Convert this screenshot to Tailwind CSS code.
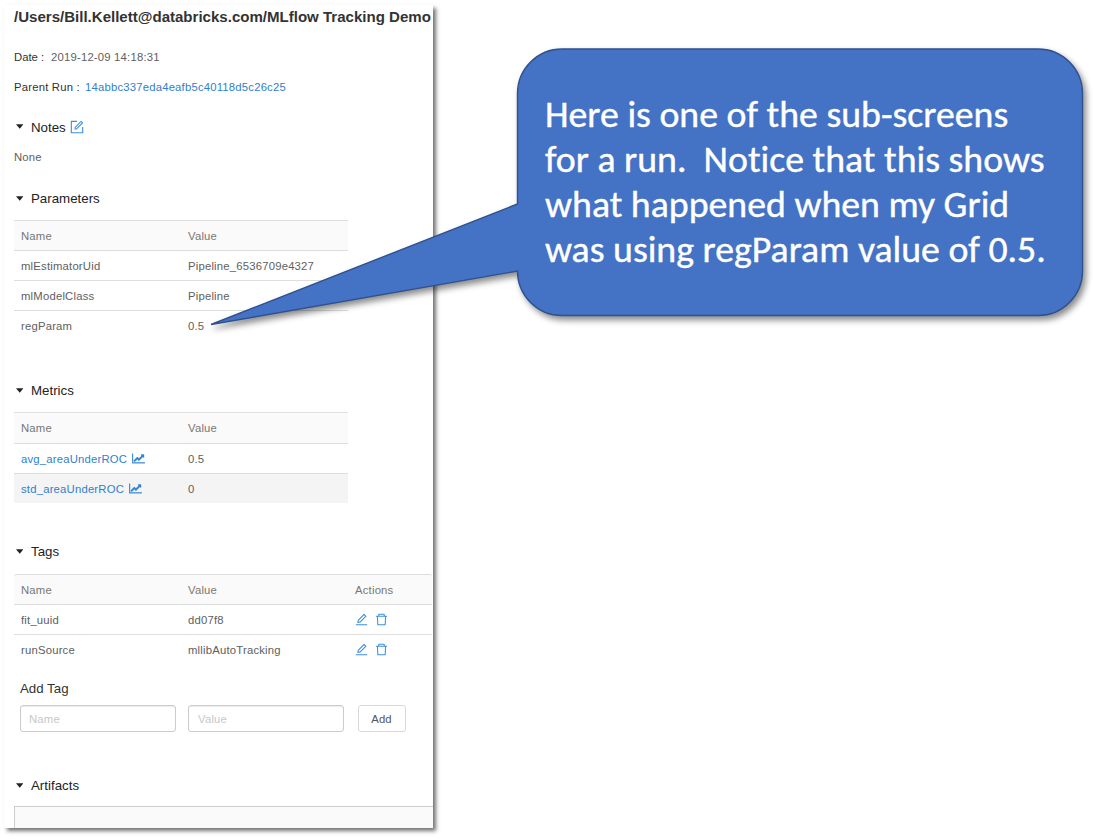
<!DOCTYPE html>
<html lang="en">
<head>
<meta charset="utf-8">
<title>MLflow Tracking Demo</title>
<script src="https://cdn.jsdelivr.net/npm/@tailwindcss/browser@4"></script>
</head>
<body class="bg-white">
<svg class="hidden">
  <symbol id="edit" viewBox="64 64 896 896"><path d="M257.7 752c2 0 4-.2 6-.5L431.9 722c2-.4 3.9-1.3 5.3-2.8l423.9-423.9a9.96 9.96 0 0 0 0-14.1L694.9 114.9c-1.9-1.9-4.4-2.9-7.1-2.9s-5.2 1-7.1 2.9L256.8 538.8c-1.5 1.5-2.4 3.3-2.8 5.3l-29.5 168.2a33.5 33.5 0 0 0 9.4 29.8c6.6 6.4 14.9 9.9 23.8 9.9zm67.4-174.4L687.8 215l73.3 73.3-362.7 362.6-88.9 15.7 15.6-89zM880 836H144c-17.7 0-32 14.3-32 32v36c0 4.4 3.6 8 8 8h784c4.4 0 8-3.6 8-8v-36c0-17.7-14.3-32-32-32z"/></symbol>
  <symbol id="trash" viewBox="64 64 896 896"><path d="M360 184h-8c4.4 0 8-3.6 8-8v8h304v-8c0 4.4 3.6 8 8 8h-8v72h72v-80c0-35.3-28.7-64-64-64H352c-35.3 0-64 28.7-64 64v80h72v-72zm504 72H160c-17.7 0-32 14.3-32 32v32c0 4.4 3.6 8 8 8h60.4l24.7 523c1.6 34.1 29.8 61 63.9 61h454c34.2 0 62.3-26.8 63.9-61l24.7-523H888c4.4 0 8-3.6 8-8v-32c0-17.7-14.3-32-32-32zM731.3 840H292.7l-24.2-512h487l-24.2 512z"/></symbol>
  <symbol id="form" viewBox="64 64 896 896"><path d="M904 512h-56c-4.4 0-8 3.6-8 8v320H184V184h320c4.4 0 8-3.6 8-8v-56c0-4.4-3.6-8-8-8H144c-17.7 0-32 14.3-32 32v736c0 17.7 14.3 32 32 32h736c17.7 0 32-14.3 32-32V520c0-4.4-3.6-8-8-8z"/><path d="M355.9 534.9L354 653.8c-.1 8.9 7.1 16.2 16 16.2h.4l118-2.9c2-.1 4-.9 5.4-2.3l415.9-415c3.1-3.1 3.1-8.2 0-11.3L785.4 114.3c-1.6-1.6-3.6-2.3-5.7-2.3s-4.1.8-5.7 2.3l-415.8 415a8.3 8.3 0 0 0-2.3 5.6zm63.5 23.6L779.7 199l45.2 45.1-360.5 359.7-45.7 1.1.7-46.4z"/></symbol>
  <symbol id="chart" viewBox="0 0 2048 1792"><path d="M2048 1536v128H0V128h128v1408h1920zM1920 288v435q0 21-19.5 29.5T1865 745l-121-121-633 633q-10 10-23 10t-23-10L832 1024l-416 416-192-192 585-585q10-10 23-10t23 10l233 233 464-464-121-121q-16-16-7.5-35.5T1453 256h435q14 0 23 9t9 23z"/></symbol>
  <symbol id="caret" viewBox="0 0 8 5"><path d="M0 0h8L4 5z"/></symbol>
</svg>

<main class="relative h-[839px] w-[1093px] overflow-hidden pl-1 pt-[5px] font-['Liberation_Sans',sans-serif]">
  <section class="h-[823px] w-[429px] overflow-hidden bg-white pl-[10px] text-[11.3px] tracking-[0.2px] text-[#606060] shadow-[3px_3px_4px_rgba(0,0,0,0.55)]">
    <h1 class="flex h-6 items-center whitespace-nowrap pt-px text-[15.05px] font-bold tracking-normal text-[#333]">/Users/Bill.Kellett@databricks.com/MLflow Tracking Demo</h1>
    <p class="mt-[13px] flex h-[30px] items-center whitespace-pre"><span class="w-[37px] tracking-normal text-[#333]">Date :</span><span>2019-12-09 14:18:31</span></p>
    <p class="flex h-[30px] items-center whitespace-pre"><span class="w-[71px] text-[#333]">Parent Run :</span><a class="text-[#2f80d0]">14abbc337eda4eafb5c40118d5c26c25</a></p>
    <h2 class="mt-[11px] flex h-[29px] items-center text-[13.3px] tracking-normal text-[#222]"><svg class="mb-[2px] ml-[1.5px] mr-2 h-[5px] w-[7.5px] fill-[#222]"><use href="#caret"/></svg><span>Notes</span><svg class="mb-px ml-1 h-[14px] w-[14px] fill-[#3d8edb]"><use href="#form"/></svg></h2>
    <p class="flex h-[30px] items-center">None</p>

    <h2 class="mt-[12px] flex h-[30px] items-center text-[13.3px] tracking-normal text-[#222]"><svg class="mb-[2px] ml-[1.5px] mr-2 h-[5px] w-[7.5px] fill-[#222]"><use href="#caret"/></svg><span>Parameters</span></h2>
    <div class="mt-[6px] w-[334px]">
      <div class="flex h-[30px] items-center border-t border-[#ddd] bg-[#fafafa] pl-[7px] pt-px text-[#777]"><span class="w-[167px]">Name</span><span>Value</span></div>
      <div class="flex h-[30px] items-center border-t border-[#ddd] pl-[7px] pt-px"><span class="w-[167px]">mlEstimatorUid</span><span>Pipeline_6536709e4327</span></div>
      <div class="flex h-[30px] items-center border-t border-[#ddd] pl-[7px] pt-px"><span class="w-[167px]">mlModelClass</span><span>Pipeline</span></div>
      <div class="flex h-[31px] items-center border-t border-[#ddd] pl-[7px]"><span class="w-[167px]">regParam</span><span>0.5</span></div>
    </div>

    <h2 class="mt-[35px] flex h-[30px] items-center text-[13.3px] tracking-normal text-[#222]"><svg class="mb-[2px] ml-[1.5px] mr-2 h-[5px] w-[7.5px] fill-[#222]"><use href="#caret"/></svg><span>Metrics</span></h2>
    <div class="mt-[6px] w-[334px]">
      <div class="flex h-[31px] items-center border-t border-[#e0e0e0] bg-[#fafafa] pl-[7px] text-[#777]"><span class="w-[167px]">Name</span><span>Value</span></div>
      <div class="flex h-[30px] items-center border-t border-[#ddd] pl-[7px] pt-px"><a class="flex w-[167px] items-center text-[#2f80d0]"><span>avg_areaUnderROC</span><svg class="mb-px ml-[5px] h-[11px] w-[13px] fill-current stroke-current stroke-[60]"><use href="#chart"/></svg></a><span>0.5</span></div>
      <div class="flex h-[30px] items-center border-t border-[#ddd] bg-[#f4f4f4] pl-[7px] pt-px"><a class="flex w-[167px] items-center text-[#2f80d0]"><span>std_areaUnderROC</span><svg class="mb-px ml-[5px] h-[11px] w-[13px] fill-current stroke-current stroke-[60]"><use href="#chart"/></svg></a><span>0</span></div>
    </div>

    <h2 class="mt-[34px] flex h-[30px] items-center text-[13.3px] tracking-normal text-[#222]"><svg class="mb-[2px] ml-[1.5px] mr-2 h-[5px] w-[7.5px] fill-[#222]"><use href="#caret"/></svg><span>Tags</span></h2>
    <div class="mt-[7px] w-[418px]">
      <div class="flex h-[30px] items-center rounded-t-[3px] border-t border-[#ddd] bg-[#fafafa] pl-[7px] pt-px text-[#777]"><span class="w-[167px]">Name</span><span class="w-[167px]">Value</span><span>Actions</span></div>
      <div class="flex h-[30px] items-center border-t border-[#ddd] pl-[7px] pt-px"><span class="w-[167px]">fit_uuid</span><span class="w-[167px]">dd07f8</span><svg class="mb-px h-[13px] w-[13px] fill-[#3d8edb]"><use href="#edit"/></svg><svg class="mb-px ml-[7px] h-[13px] w-[13px] fill-[#3d8edb]"><use href="#trash"/></svg></div>
      <div class="flex h-[31px] items-center border-t border-[#ddd] pl-[7px]"><span class="w-[167px]">runSource</span><span class="w-[167px]">mllibAutoTracking</span><svg class="mb-px h-[13px] w-[13px] fill-[#3d8edb]"><use href="#edit"/></svg><svg class="mb-px ml-[7px] h-[13px] w-[13px] fill-[#3d8edb]"><use href="#trash"/></svg></div>
    </div>
    <h3 class="ml-[6px] mt-[14px] flex h-5 items-center text-[13.3px] tracking-normal text-[#333]">Add Tag</h3>
    <div class="ml-[6px] mt-[6px] flex h-[27px]">
      <div class="flex w-[156px] items-center rounded-[3px] border border-[#ccc] pl-2 pt-px text-[#c8c8c8] shadow-[inset_0_1px_1px_rgba(0,0,0,0.08)]">Name</div>
      <div class="ml-3 flex w-[156px] items-center rounded-[3px] border border-[#ccc] pl-[9px] pt-px text-[#c8c8c8] shadow-[inset_0_1px_1px_rgba(0,0,0,0.08)]">Value</div>
      <div class="ml-[14px] flex w-[48px] items-center justify-center rounded-[3px] border border-[#d9d9d9] pr-px pt-px text-[#555]">Add</div>
    </div>
    <h2 class="mt-[39px] flex h-[30px] items-center text-[13.3px] tracking-normal text-[#222]"><svg class="mb-[2px] ml-[1.5px] mr-2 h-[5px] w-[7.5px] fill-[#222]"><use href="#caret"/></svg><span>Artifacts</span></h2>
    <div class="mt-[5px] h-10 border-l border-t border-[#ccc] bg-[#fafafa]"></div>
  </section>

  <!-- Speech bubble pointing at the regParam value -->
  <svg class="absolute left-0 top-0 h-[839px] w-[1093px] drop-shadow-[3px_4px_3px_rgba(0,0,0,0.45)]" viewBox="0 0 1093 839">
    <path d="M562 49H1038A44.5 44.5 0 0 1 1082.5 93.5V271A44.5 44.5 0 0 1 1038 315.5H562A44.5 44.5 0 0 1 517.5 271L211 324.5L517.5 204V93.5A44.5 44.5 0 0 1 562 49Z" fill="#4472c4" stroke="#2f528f" stroke-width="1.4"/>
  </svg>
  <div class="absolute left-[545px] top-[92px] font-[Carlito,Lato,sans-serif] text-[37.8px] leading-[45px] text-white [-webkit-text-stroke:0.4px_white] [font-variant-ligatures:none]">
    <p class="whitespace-pre">Here is one of the sub-screens</p>
    <p class="whitespace-pre">for a run.  Notice that this shows</p>
    <p class="whitespace-pre">what happened when my Grid</p>
    <p class="whitespace-pre">was using regParam value of 0.5.</p>
  </div>
</main>
</body>
</html>
